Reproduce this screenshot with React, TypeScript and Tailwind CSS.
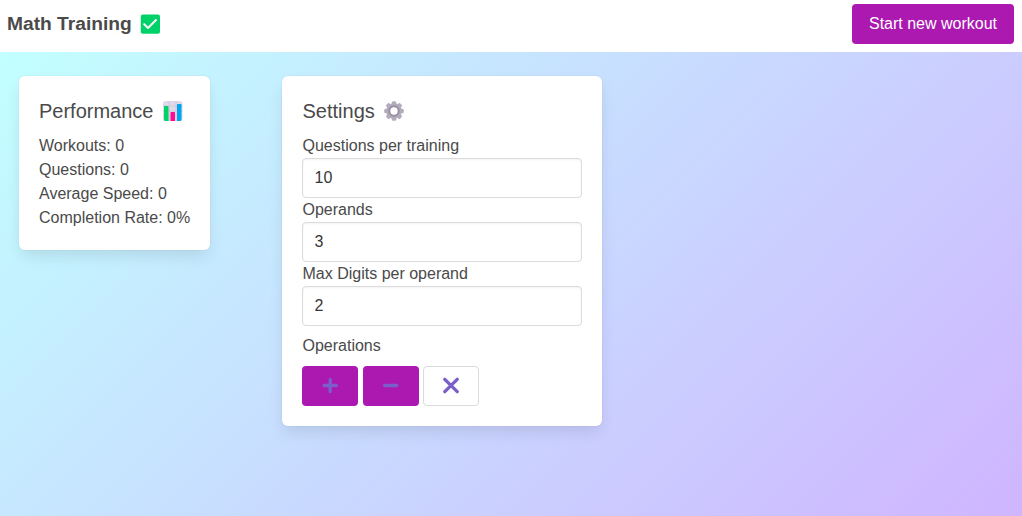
import type { ReactNode } from "react";

function Card({ className, children }: { className: string; children: ReactNode }) {
  return (
    <section
      className={`rounded-md bg-white p-5 shadow-[0_8px_16px_-2px_rgba(10,10,10,0.1),0_0_0_1px_rgba(10,10,10,0.02)] ${className}`}
    >
      {children}
    </section>
  );
}

function CheckIcon() {
  return (
    <svg width="20" height="20" viewBox="0 0 20 20" fill="none">
      <rect x="0.8" y="0.5" width="19.2" height="19.2" rx="2" fill="#00d26a" />
      <path d="M4.2 10.2 8 14 16 6" stroke="#f4f4f4" strokeWidth="2.1" strokeLinecap="round" strokeLinejoin="round" />
    </svg>
  );
}

function ChartIcon() {
  return (
    <svg width="20" height="20" viewBox="0 0.5 20 20" fill="none">
      <rect x="0" y="0.5" width="19.5" height="20" rx="2.5" fill="#e1d8ec" />
      <path d="M0 5.5h19.5M0 10.5h19.5M0 15.5h19.5M6.3 .5v20M13 .5v20" stroke="#cdc4d6" strokeWidth="0.8" />
      <path d="M1 6.2q0-.7.7-.7h3.1q.7 0 .7.7v14.3H2.5Q1 20.5 1 19z" fill="#00d26a" />
      <path d="M7.5 12.2q0-.7.7-.7h3.1q.7 0 .7.7v8.3H7.5z" fill="#ff0b91" />
      <path d="M14 4.2q0-.7.7-.7h3.1q.7 0 .7.7V19q0 1.5-1.5 1.5h-3z" fill="#00a6ed" />
    </svg>
  );
}

const teeth = [0, 45, 90, 135, 180, 225, 270, 315];

function GearIcon() {
  return (
    <svg width="20" height="20" viewBox="0 0 20 20" fill="none">
      {teeth.map((angle) => (
        <rect key={angle} x="7.7" y="0.2" width="4.6" height="5" rx="1.5" fill="#b4acbc" transform={`rotate(${angle} 10 10)`} />
      ))}
      <circle cx="10" cy="10" r="5.8" stroke="#b4acbc" strokeWidth="4" />
      <circle cx="10" cy="10" r="4.8" stroke="#998ea4" strokeWidth="1.8" />
    </svg>
  );
}

function Glyph({ d }: { d: string }) {
  return (
    <svg width="18" height="18" viewBox="0 0 18 18" fill="none">
      <path d={d} stroke="#7a5fc9" strokeWidth="3.3" strokeLinecap="round" />
    </svg>
  );
}

function Field({ label, value }: { label: string; value: string }) {
  return (
    <label className="block">
      <span className="block pl-[0.5px]">{label}</span>
      <input
        defaultValue={value}
        className="block h-10 w-full rounded border border-[#dbdbdb] bg-white px-[11.5px] text-[#363636] shadow-[inset_0_1px_2px_rgba(10,10,10,0.05)] outline-none"
      />
    </label>
  );
}

export default function App() {
  return (
    <div className="flex h-screen flex-col overflow-hidden font-['Liberation_Sans',Arial,sans-serif] text-base leading-6 text-[#4a4a4a]">
      <header className="flex h-13 shrink-0 items-center justify-between bg-white pr-2 pb-1 pl-[7px]">
        <h1 className="flex items-center gap-[8px] text-[19.2px] leading-6 font-bold">
          Math Training <CheckIcon />
        </h1>
        <button className="h-10 w-[162px] rounded bg-[#ab19b0] text-white">Start new workout</button>
      </header>
      <main className="flex flex-1 items-start gap-18 bg-[linear-gradient(135deg,#c2ffff_0%,#cfb5ff_100%)] pt-6 pl-[19px]">
        <Card className="h-[174px] w-[191px] whitespace-nowrap">
          <h2 className="mb-2 flex h-[30px] items-center gap-[9px] text-xl">
            Performance <ChartIcon />
          </h2>
          <p>Workouts: 0</p>
          <p>Questions: 0</p>
          <p>Average Speed: 0</p>
          <p>Completion Rate: 0%</p>
        </Card>
        <Card className="h-[350px] w-80">
          <h2 className="mb-2 flex h-[30px] items-center gap-[9px] pl-[0.5px] text-xl">
            Settings <GearIcon />
          </h2>
          <Field label="Questions per training" value="10" />
          <Field label="Operands" value="3" />
          <Field label="Max Digits per operand" value="2" />
          <p className="mt-2 mb-2 pl-[0.5px]">Operations</p>
          <div className="flex gap-[5px]">
            <button className="grid h-10 w-14 place-items-center rounded bg-[#ab19b0]">
              <Glyph d="M9.2 2.4v12.2M3.1 8.5h12.2" />
            </button>
            <button className="grid h-10 w-14 place-items-center rounded bg-[#ab19b0]">
              <Glyph d="M2.6 8.5h12.2" />
            </button>
            <button className="-ml-px grid h-10 w-14 place-items-center rounded border border-[#dbdbdb] bg-white">
              <Glyph d="M2.8 2.3l12.4 12.4M15.2 2.3L2.8 14.7" />
            </button>
          </div>
        </Card>
      </main>
    </div>
  );
}
